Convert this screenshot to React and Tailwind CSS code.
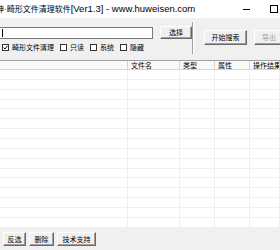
import React from 'react';

const font = { fontFamily: '"Liberation Sans", "Noto Sans CJK SC", sans-serif' };

const Btn = ({ children, className = '', disabled }) => (
  <div
    className={`flex items-center justify-center bg-[#f0f0f0] border border-t-white border-l-white border-r-[#696969] border-b-[#696969] shadow-[inset_-1px_-1px_0_#a0a0a0] text-[7px] leading-none ${disabled ? 'text-[#a0a0a0]' : 'text-black'} ${className}`}
  >
    {children}
  </div>
);

const Check = ({ checked, label }) => (
  <div className="flex items-center gap-[3px]">
    <div className="w-[7px] h-[7px] border border-[#333] bg-white flex items-center justify-center">
      {checked && (
        <svg width="5" height="5" viewBox="0 0 5 5">
          <path d="M0.5 2.5 L2 4 L4.5 0.8" stroke="#000" strokeWidth="1" fill="none" />
        </svg>
      )}
    </div>
    <span className="text-[7px] leading-none">{label}</span>
  </div>
);

const cols = ['w-[128px]', 'w-[52px]', 'w-[35px]', 'w-[35px]', 'flex-1'];
const heads = ['', '文件名', '类型', '属性', '操作结果'];

export default function App() {
  const rows = Array.from({ length: 16 });
  return (
    <div className="w-[280px] h-[250px] bg-[#f0f0f0] overflow-hidden flex flex-col text-black" style={font}>
      {/* 标题栏 */}
      <div className="h-[18px] bg-white flex items-center shrink-0">
        <span className="ml-[-12px] whitespace-nowrap leading-none flex items-baseline">
          <span className="text-[8px]">大神·畸形文件清理软件</span>
          <span className="text-[9.5px]">[Ver1.3] - www.huweisen.com</span>
        </span>
        <div className="ml-auto flex items-center">
          <div className="w-[7px] h-px bg-black mr-[20px]" />
          <div className="w-[8px] h-[8px] border border-black mr-[2px]" />
        </div>
      </div>

      {/* 工具区 */}
      <div className="flex h-[42px] shrink-0">
        <div className="w-[199px] pt-[8px]">
          <div className="flex items-center">
            <div className="ml-[-2px] w-[155px] h-[12px] bg-white border border-[#7a7a7a] flex items-center">
              <div className="ml-[3px] w-px h-[8px] bg-black" />
            </div>
            <Btn className="ml-[7px] w-[32px] h-[13px]">选择</Btn>
          </div>
          <div className="flex items-center mt-[5px] ml-[2px] gap-[6px]">
            <Check checked label="畸形文件清理" />
            <Check label="只读" />
            <Check label="系统" />
            <Check label="隐藏" />
          </div>
        </div>
        <div className="mt-[4px] h-[32px] w-[2px] border-l border-[#a0a0a0] border-r border-r-white" />
        <div className="flex pt-[12px] ml-[10px] gap-[7px]">
          <Btn className="w-[43px] h-[15px]">开始搜索</Btn>
          <Btn className="w-[30px] h-[15px]" disabled>导出</Btn>
        </div>
      </div>

      {/* 列表 */}
      <div className="h-[167px] bg-white border-t border-[#a0a0a0] flex flex-col shrink-0 overflow-hidden">
        <div className="flex h-[9px] bg-[#fafafa] border-b border-[#d5d5d5] shrink-0">
          {heads.map((h, i) => (
            <div key={i} className={`${cols[i]} border-r border-[#d5d5d5] text-[7px] leading-[9px] pl-[3px] whitespace-nowrap overflow-hidden`}>
              {h}
            </div>
          ))}
        </div>
        {rows.map((_, r) => (
          <div key={r} className="flex h-[9.86px] border-b border-[#efefef] shrink-0">
            {cols.map((c, i) => (
              <div key={i} className={`${c} border-r border-[#efefef]`} />
            ))}
          </div>
        ))}
      </div>

      {/* 底部按钮 */}
      <div className="flex pl-[3px] pt-[5px] gap-[3px]">
        <Btn className="w-[23px] h-[14px]">反选</Btn>
        <Btn className="w-[25px] h-[14px]">删除</Btn>
        <Btn className="w-[39px] h-[14px]">技术支持</Btn>
      </div>
    </div>
  );
}
